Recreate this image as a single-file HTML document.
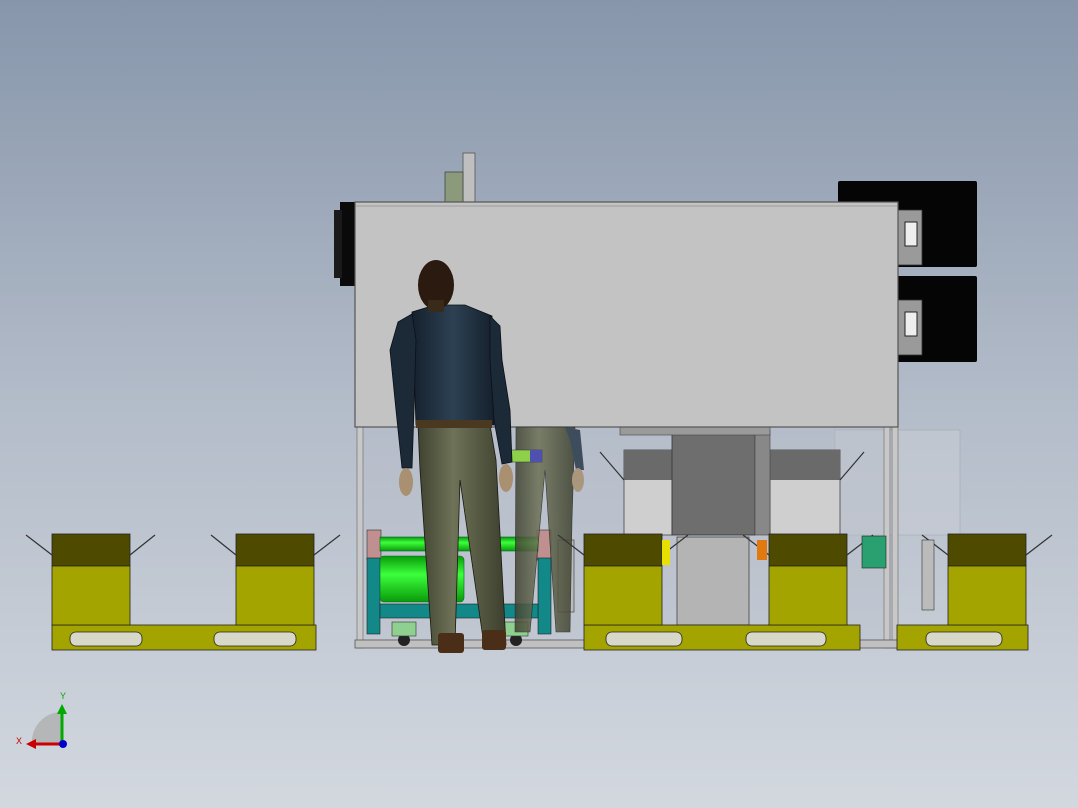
<!DOCTYPE html>
<html><head><meta charset="utf-8"><style>
html,body{margin:0;padding:0;width:1078px;height:808px;overflow:hidden}
svg{display:block}
</style></head><body>
<svg width="1078" height="808" viewBox="0 0 1078 808" xmlns="http://www.w3.org/2000/svg">
<defs>
<linearGradient id="bg" x1="0" y1="0" x2="0" y2="1">
<stop offset="0" stop-color="#8796ab"/><stop offset="0.5" stop-color="#b3bcc9"/><stop offset="1" stop-color="#d3d8df"/>
</linearGradient>
<linearGradient id="pant" x1="0" y1="0" x2="1" y2="0">
<stop offset="0" stop-color="#3f4230"/><stop offset="0.4" stop-color="#6e7257"/><stop offset="1" stop-color="#3c3f2c"/>
</linearGradient>
<linearGradient id="jack" x1="0" y1="0" x2="1" y2="0">
<stop offset="0" stop-color="#15202c"/><stop offset="0.5" stop-color="#2d4153"/><stop offset="1" stop-color="#15202c"/>
</linearGradient>
<linearGradient id="grn" x1="0" y1="0" x2="0" y2="1">
<stop offset="0" stop-color="#0a9a0a"/><stop offset="0.4" stop-color="#3cff3c"/><stop offset="1" stop-color="#0a9a0a"/>
</linearGradient>
</defs>
<rect width="1078" height="808" fill="url(#bg)"/>

<rect x="463" y="153" width="12" height="50" fill="#bfbfbf" stroke="#555" stroke-width="0.8"/>
<rect x="445" y="172" width="18" height="30" fill="#8a9a7a" stroke="#444" stroke-width="0.8"/>

<rect x="838" y="181" width="139" height="86" fill="#050505" rx="2"/>
<rect x="838" y="276" width="139" height="86" fill="#050505" rx="2"/>
<rect x="898" y="210" width="24" height="55" fill="#9a9a9a" stroke="#333" stroke-width="0.8"/>
<rect x="898" y="300" width="24" height="55" fill="#9a9a9a" stroke="#333" stroke-width="0.8"/>
<rect x="905" y="222" width="12" height="24" fill="#eee" stroke="#222"/>
<rect x="905" y="312" width="12" height="24" fill="#eee" stroke="#222"/>

<rect x="340" y="202" width="15" height="84" fill="#0a0a0a"/>
<rect x="334" y="210" width="8" height="68" fill="#1a1a1a"/>

<rect x="835" y="430" width="125" height="105" fill="#c8ccd4" opacity="0.6" stroke="#999" stroke-width="0.6"/>
<rect x="362" y="427" width="528" height="218" fill="#b6bdc8" opacity="0.35"/>

<rect x="624" y="450" width="48" height="85" fill="#cfcfcf" stroke="#444" stroke-width="0.8"/>
<rect x="624" y="450" width="48" height="30" fill="#6a6a6a"/>
<rect x="770" y="450" width="70" height="85" fill="#cfcfcf" stroke="#444" stroke-width="0.8"/>
<rect x="770" y="450" width="70" height="30" fill="#6a6a6a"/>
<rect x="672" y="430" width="83" height="105" fill="#6e6e6e" stroke="#333" stroke-width="0.8"/>
<rect x="755" y="430" width="15" height="105" fill="#888" stroke="#444" stroke-width="0.6"/>
<rect x="620" y="427" width="150" height="8" fill="#9a9a9a" stroke="#444" stroke-width="0.6"/>
<rect x="677" y="537" width="72" height="88" fill="#b4b4b4" stroke="#444" stroke-width="0.8"/>

<rect x="357" y="427" width="6" height="221" fill="#c8c8c8" stroke="#666" stroke-width="0.6"/>
<rect x="884" y="427" width="6" height="221" fill="#c8c8c8" stroke="#666" stroke-width="0.6"/>
<rect x="892" y="427" width="6" height="221" fill="#c8c8c8" stroke="#666" stroke-width="0.6"/>
<rect x="355" y="640" width="543" height="8" fill="#c0c0c0" stroke="#555" stroke-width="0.8"/>

<rect x="355" y="202" width="543" height="225" fill="#c3c3c3" stroke="#555" stroke-width="1.2"/>
<line x1="355" y1="206" x2="898" y2="206" stroke="#777" stroke-width="0.6"/>

<rect x="367" y="530" width="14" height="30" fill="#c09090" stroke="#333" stroke-width="0.6"/>
<rect x="537" y="530" width="14" height="30" fill="#c09090" stroke="#333" stroke-width="0.6"/>
<rect x="367" y="558" width="13" height="76" fill="#128888" stroke="#222" stroke-width="0.6"/>
<rect x="538" y="558" width="13" height="76" fill="#128888" stroke="#222" stroke-width="0.6"/>
<rect x="380" y="537" width="158" height="14" fill="url(#grn)" stroke="#063" stroke-width="0.6"/>
<rect x="380" y="556" width="84" height="46" fill="url(#grn)" stroke="#063" stroke-width="0.6" rx="4"/>
<rect x="380" y="604" width="158" height="14" fill="#128888" stroke="#222" stroke-width="0.6"/>
<circle cx="404" cy="640" r="6" fill="#222"/><circle cx="516" cy="640" r="6" fill="#222"/>
<rect x="392" y="622" width="24" height="14" fill="#8fcf8f" stroke="#333" stroke-width="0.6"/>
<rect x="504" y="622" width="24" height="14" fill="#8fcf8f" stroke="#333" stroke-width="0.6"/>
<rect x="558" y="540" width="16" height="72" fill="#bbb" stroke="#333" stroke-width="0.6"/>

<g opacity="0.85">
<path d="M516 427 L575 427 L572 520 L570 632 L556 632 L545 470 L530 632 L515 632 Z" fill="url(#pant)" stroke="#222" stroke-width="0.6"/>
<path d="M565 427 L580 430 L584 470 L576 470 L570 440 Z" fill="#2a3a4a"/>
<ellipse cx="578" cy="480" rx="6" ry="12" fill="#a89070"/>
</g>
<rect x="510" y="450" width="32" height="12" fill="#8fd04a" stroke="#333" stroke-width="0.5"/>
<rect x="530" y="450" width="12" height="12" fill="#5050b0"/>

<!-- main person -->
<path d="M418 425 L490 425 L496 460 L506 645 L484 645 L460 480 L455 645 L432 645 L420 470 Z" fill="url(#pant)" stroke="#1a1a10" stroke-width="0.8"/>
<rect x="438" y="633" width="26" height="20" fill="#4a2e18" rx="3"/>
<rect x="482" y="630" width="24" height="20" fill="#4a2e18" rx="3"/>
<path d="M412 312 L435 305 L465 305 L492 316 L494 425 L416 425 Z" fill="url(#jack)" stroke="#0a1018" stroke-width="0.8"/>
<path d="M412 314 L398 322 L390 350 L396 410 L402 468 L412 468 L414 410 L416 340 Z" fill="#1c2a38" stroke="#0a1018" stroke-width="0.8"/>
<path d="M490 316 L500 326 L502 360 L510 410 L512 462 L502 464 L494 420 L490 360 Z" fill="#1c2a38" stroke="#0a1018" stroke-width="0.8"/>
<rect x="416" y="420" width="76" height="8" fill="#4a3820"/>
<ellipse cx="406" cy="482" rx="7" ry="14" fill="#a89070"/>
<ellipse cx="506" cy="478" rx="7" ry="14" fill="#a89070"/>
<ellipse cx="436" cy="285" rx="18" ry="25" fill="#2a1a10"/>
<rect x="428" y="300" width="16" height="12" fill="#3a2a1a"/>

<g stroke="#222" stroke-width="0.8">
<rect x="52" y="625" width="264" height="25" fill="#a4a400"/>
<rect x="584" y="625" width="276" height="25" fill="#a4a400"/>
<rect x="897" y="625" width="131" height="25" fill="#a4a400"/>
<rect x="52" y="534" width="78" height="32" fill="#4e4a00"/><rect x="52" y="566" width="78" height="59" fill="#a4a400"/>
<rect x="236" y="534" width="78" height="32" fill="#4e4a00"/><rect x="236" y="566" width="78" height="59" fill="#a4a400"/>
<rect x="584" y="534" width="78" height="32" fill="#4e4a00"/><rect x="584" y="566" width="78" height="59" fill="#a4a400"/>
<rect x="769" y="534" width="78" height="32" fill="#4e4a00"/><rect x="769" y="566" width="78" height="59" fill="#a4a400"/>
<rect x="948" y="534" width="78" height="32" fill="#4e4a00"/><rect x="948" y="566" width="78" height="59" fill="#a4a400"/>
</g>
<g fill="#d8d8c8" stroke="#222" stroke-width="0.8">
<rect x="70" y="632" width="72" height="14" rx="6"/><rect x="214" y="632" width="82" height="14" rx="6"/>
<rect x="606" y="632" width="76" height="14" rx="6"/><rect x="746" y="632" width="80" height="14" rx="6"/>
<rect x="926" y="632" width="76" height="14" rx="6"/>
</g>
<g stroke="#333" stroke-width="1.2">
<line x1="52" y1="555" x2="26" y2="535"/><line x1="130" y1="555" x2="155" y2="535"/>
<line x1="236" y1="555" x2="211" y2="535"/><line x1="314" y1="555" x2="340" y2="535"/>
<line x1="584" y1="555" x2="558" y2="535"/><line x1="662" y1="555" x2="688" y2="535"/>
<line x1="769" y1="555" x2="743" y2="535"/><line x1="847" y1="555" x2="873" y2="535"/>
<line x1="948" y1="555" x2="922" y2="535"/><line x1="1026" y1="555" x2="1052" y2="535"/>
<line x1="624" y1="480" x2="600" y2="452"/><line x1="840" y1="480" x2="864" y2="452"/>
</g>
<rect x="662" y="540" width="8" height="25" fill="#e8e000"/>
<rect x="757" y="540" width="10" height="20" fill="#e07a10"/>
<rect x="862" y="536" width="24" height="32" fill="#2aa070" stroke="#222" stroke-width="0.6"/>
<rect x="922" y="540" width="12" height="70" fill="#bbb" stroke="#333" stroke-width="0.6"/>

<path d="M32 745 L62 745 L62 712 A30 30 0 0 0 32 745 Z" fill="#aaa" opacity="0.7"/>
<line x1="62" y1="744" x2="62" y2="712" stroke="#0a0" stroke-width="3"/>
<polygon points="57,714 67,714 62,704" fill="#0a0"/>
<line x1="62" y1="744" x2="34" y2="744" stroke="#c00" stroke-width="3"/>
<polygon points="36,739 36,749 26,744" fill="#c00"/>
<circle cx="63" cy="744" r="4" fill="#00c"/>
<text x="60" y="699" font-family="Liberation Sans, sans-serif" font-size="9" fill="#0a0">Y</text>
<text x="16" y="744" font-family="Liberation Sans, sans-serif" font-size="9" fill="#c00">X</text>
</svg>
</body></html>
